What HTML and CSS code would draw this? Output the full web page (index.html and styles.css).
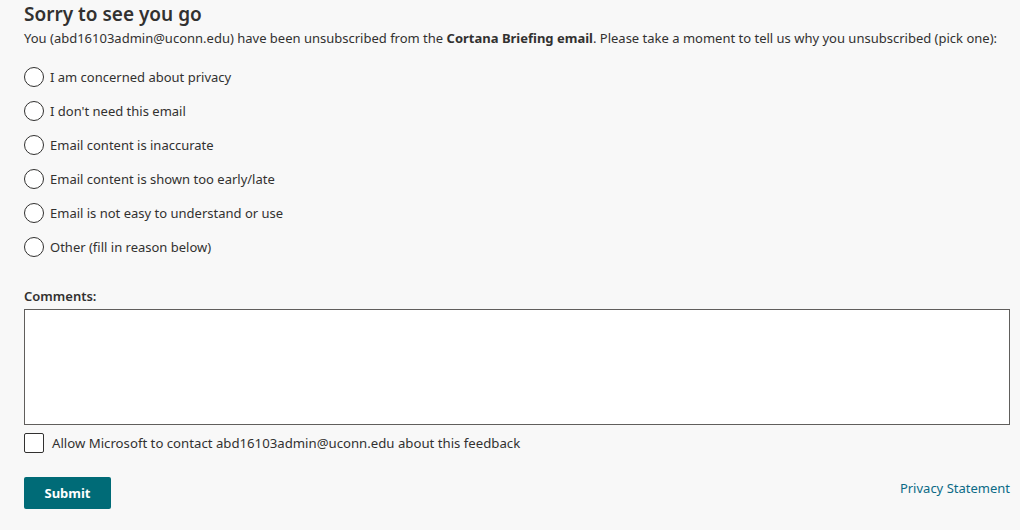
FILE: index.html
```html
<!DOCTYPE html>
<html lang="en">
<head>
    <meta charset="UTF-8">
    <title>Unsubscribe</title>
    <link rel="stylesheet" href="styles.css">
</head>
<body>
    <form class="page">
        <h1 class="title">Sorry to see you go</h1>
        <p class="intro">You (abd16103admin@uconn.edu) have been unsubscribed from the <b>Cortana Briefing email</b>. Please take a moment to tell us why you unsubscribed (pick one):</p>

        <div class="reasons">
            <label class="reason"><input type="radio" name="reason"><span>I am concerned about privacy</span></label>
            <label class="reason"><input type="radio" name="reason"><span>I don't need this email</span></label>
            <label class="reason"><input type="radio" name="reason"><span>Email content is inaccurate</span></label>
            <label class="reason"><input type="radio" name="reason"><span>Email content is shown too early/late</span></label>
            <label class="reason"><input type="radio" name="reason"><span>Email is not easy to understand or use</span></label>
            <label class="reason"><input type="radio" name="reason"><span>Other (fill in reason below)</span></label>
        </div>

        <label class="comments-label" for="comments">Comments:</label>
        <textarea id="comments" class="comments"></textarea>

        <label class="contact"><input type="checkbox"><span>Allow Microsoft to contact abd16103admin@uconn.edu about this feedback</span></label>

        <div class="actions">
            <button type="button" class="submit">Submit</button>
            <a href="#" class="privacy">Privacy Statement</a>
        </div>
    </form>
</body>
</html>
```
FILE: styles.css
```css
body {
    margin: 0;
    background: #f8f8f8;
    color: #323130;
    font-family: 'Noto Sans', 'Open Sans', sans-serif;
    font-size: 13px;
}

.page {
    display: flex;
    flex-direction: column;
    padding: 1px 10px 0 24px;
}

.title {
    margin: 0;
    font-size: 19px;
    font-weight: 600;
    line-height: 26px;
}

.intro {
    margin: 2px 0 0;
    line-height: 18px;
}

.intro b {
    font-weight: 700;
}

/* Reason list */
.reasons {
    display: flex;
    flex-direction: column;
    gap: 12px;
    margin-top: 19px;
}

.reason {
    display: flex;
    align-items: center;
    gap: 6px;
    height: 22px;
}

.reason input {
    appearance: none;
    margin: 0;
    width: 20px;
    height: 20px;
    border: 1px solid #323130;
    border-radius: 50%;
    background: #fff;
}

.reason input:checked {
    box-shadow: inset 0 0 0 4px #fff;
    background: #323130;
}

.comments-label {
    margin-top: 29px;
    font-weight: 600;
    line-height: 18px;
}

.comments {
    margin-top: 4px;
    height: 116px;
    box-sizing: border-box;
    border: 1px solid #605e5c;
    border-radius: 0;
    background: #fff;
    resize: none;
    font: inherit;
}

/* Contact checkbox */
.contact {
    display: flex;
    align-items: center;
    gap: 8px;
    margin-top: 8px;
    font-size: 13.2px;
}

.contact input {
    appearance: none;
    margin: 0;
    width: 20px;
    height: 20px;
    border: 1px solid #323130;
    border-radius: 2px;
    background: #fff;
}

.actions {
    display: flex;
    justify-content: space-between;
    align-items: center;
    margin-top: 24px;
}

.submit {
    width: 87px;
    height: 32px;
    border: 0;
    border-radius: 2px;
    background: #006b77;
    color: #fff;
    font: inherit;
    font-weight: 700;
    font-size: 13px;
}

.privacy {
    margin-bottom: 10px;
    color: #0b6a86;
    text-decoration: none;
}
```
